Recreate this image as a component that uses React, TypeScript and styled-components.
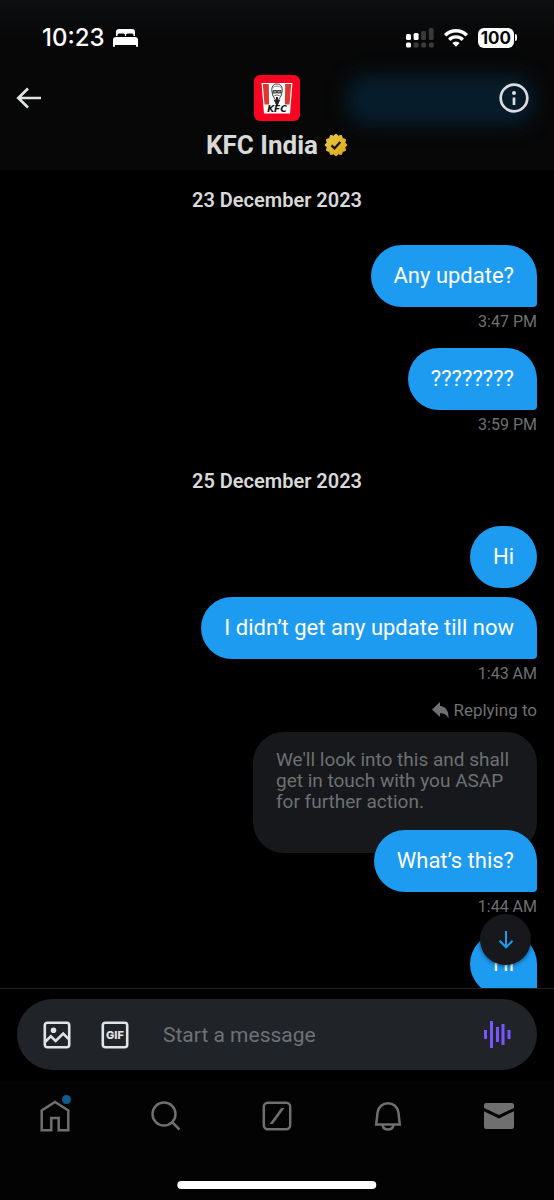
import React from "react";
import styled, { createGlobalStyle } from "styled-components";

const GlobalStyle = createGlobalStyle`
  * { box-sizing: border-box; }
  body { margin: 0; background: #000; font-family: Roboto, sans-serif; }
  button { border: 0; padding: 0; background: none; color: inherit; font: inherit; cursor: pointer; }
  svg { display: block; }
`;

const Screen = styled.div`
  display: flex;
  flex-direction: column;
  height: 100vh;
  overflow: hidden;
  background: #000;
  color: #d9d9d9;
`;

const Top = styled.header`
  position: relative;
  flex: none;
  overflow: hidden;
  background: linear-gradient(#0e0f11 0, #070707 40px, #070707 100%);
`;

const Glow = styled.div`
  position: absolute;
  right: 20px;
  top: 74px;
  width: 188px;
  height: 52px;
  border-radius: 20px;
  background: #071c2a;
  filter: blur(9px);
`;

const StatusBar = styled.div`
  position: relative;
  display: flex;
  align-items: center;
  justify-content: space-between;
  height: 75px;
  padding: 0 37px 0 42px;
  color: #fff;
`;

const Clock = styled.div`
  display: flex;
  align-items: center;
  gap: 8px;
  font: 500 24px/32px Inter, sans-serif;
`;

const StatusIcons = styled.div`
  display: flex;
  align-items: center;
  gap: 10px;
`;

const Battery = styled.div`
  display: flex;
  align-items: center;
  gap: 1px;
`;

const BatteryLevel = styled.span`
  padding: 0 3px;
  border-radius: 6px;
  background: #fff;
  color: #070707;
  font: 700 17px/20px Inter, sans-serif;
`;

const BatteryTip = styled.span`
  width: 2px;
  height: 7px;
  border-radius: 0 2px 2px 0;
  background: #fff;
`;

const NavRow = styled.div`
  position: relative;
  display: grid;
  grid-template-columns: 1fr auto 1fr;
  align-items: center;
  padding: 0 16px;
`;

const IconButton = styled.button<{ $end?: boolean }>`
  justify-self: ${(p) => (p.$end ? "end" : "start")};
  padding-right: ${(p) => (p.$end ? "9px" : "0")};
`;

const Name = styled.h1`
  position: relative;
  display: flex;
  align-items: center;
  justify-content: center;
  gap: 6px;
  margin: 0;
  padding: 9px 0 10px;
  font-size: 26px;
  line-height: 30px;
  font-weight: 700;
`;

const Conversation = styled.main`
  position: relative;
  flex: 1;
  min-height: 0;
  overflow: hidden;
  display: flex;
  flex-direction: column;
  padding: 0 17px;
`;

const Group = styled.section`
  display: flex;
  flex-direction: column;
  align-items: flex-end;
  flex: none;
`;

const DateLabel = styled.h2`
  align-self: center;
  margin: 16px 0 31px;
  font-size: 20px;
  line-height: 28px;
  font-weight: 600;
`;

const Bubble = styled.p<{ $tail?: boolean }>`
  position: relative;
  margin: 0;
  padding: 18px 23px;
  border-radius: ${(p) => (p.$tail ? "31px 31px 4px 31px" : "31px")};
  background: #1d9bf0;
  color: #fff;
  font-size: 22px;
  line-height: 26px;
`;

const Time = styled.time`
  margin: 5px 0 16px;
  color: #6e7072;
  font-size: 16px;
  line-height: 20px;
`;

const Stack = styled.div`
  display: flex;
  flex-direction: column;
  align-items: flex-end;
  gap: 9px;
`;

const ReplyLabel = styled.div`
  display: flex;
  align-items: center;
  gap: 4px;
  margin-bottom: 12px;
  color: #6e7072;
  font-size: 17px;
  line-height: 20px;
`;

const Quote = styled.blockquote`
  width: 284px;
  margin: 0 0 -23px;
  padding: 17px 23px 41px;
  border-radius: 31px;
  background: #16181c;
  color: #6e7072;
  font-size: 19px;
  line-height: 21px;
`;

const ScrollDown = styled.button`
  position: absolute;
  right: 23px;
  bottom: 23px;
  display: grid;
  place-items: center;
  width: 51px;
  height: 51px;
  border-radius: 50%;
  background: #16181c;
  box-shadow: 0 1px 4px rgba(0, 0, 0, 0.5);
`;

const Composer = styled.form`
  flex: none;
  padding: 10px 17px 11px;
  border-top: 1px solid #202224;
`;

const Field = styled.div`
  display: flex;
  align-items: center;
  height: 71px;
  padding: 0 26px;
  border-radius: 36px;
  background: #202327;
`;

const ToolButton = styled.button`
  flex: none;
  margin-right: 30px;
`;

const MessageInput = styled.input`
  flex: 1;
  min-width: 0;
  border: 0;
  outline: 0;
  padding: 0 0 0 4px;
  background: none;
  color: #d9d9d9;
  font: 21px/28px Roboto, sans-serif;
  &::placeholder { color: #6e7277; opacity: 1; }
`;

const TabBar = styled.nav`
  flex: none;
  display: flex;
  justify-content: space-between;
  padding: 0 0 49px;
  background: #030303;
`;

const Tab = styled.button`
  position: relative;
  display: grid;
  place-items: center;
  flex: 1;
  height: 70px;
  color: #6f6f6f;
`;

const Unread = styled.span`
  position: absolute;
  left: calc(50% + 7px);
  top: 14px;
  width: 9px;
  height: 9px;
  border-radius: 50%;
  background: #115a8c;
`;

const HomeIndicator = styled.div`
  position: absolute;
  left: 50%;
  bottom: 11px;
  width: 36%;
  height: 8px;
  border-radius: 4px;
  background: #fff;
  transform: translateX(-50%);
`;

const BedIcon = () => (
  <svg width="25" height="18" viewBox="0 0 25 18" fill="#fff" aria-hidden="true">
    <path d="M3 7V3a3 3 0 0 1 3-3h13a3 3 0 0 1 3 3v4h-1.500V6a1.500 1.500 0 0 0-1.500-1.500h-4.500A1.500 1.500 0 0 0 13 6v1h-1V6a1.500 1.500 0 0 0-1.500-1.500H6A1.500 1.500 0 0 0 4.500 6v1z" />
    <path d="M3 8h19a3 3 0 0 1 3 3v6a1 1 0 0 1-2 0v-1H2v1a1 1 0 0 1-2 0v-6a3 3 0 0 1 3-3z" />
  </svg>
);

const SignalIcon = () => (
  <svg width="28" height="20" viewBox="0 0 28 20" aria-hidden="true">
    <g fill="#fff">
      <rect x="0" y="6" width="5" height="6" rx="1.500" />
      <rect x="7.600" y="5" width="5" height="7" rx="1.500" />
      <rect x="0" y="14.500" width="5" height="5" rx="1.500" />
    </g>
    <g fill="#3a3a3a">
      <rect x="15.200" y="3" width="4.800" height="9" rx="1.500" />
      <rect x="22.800" y="0" width="4.800" height="12" rx="1.500" />
      <rect x="7.600" y="14.500" width="5" height="5" rx="1.500" />
      <rect x="15.200" y="14.500" width="5" height="5" rx="1.500" />
      <rect x="22.800" y="14.500" width="5" height="5" rx="1.500" />
    </g>
  </svg>
);

const WifiIcon = () => (
  <svg width="24" height="18" viewBox="0 0 24 18" fill="none" stroke="#fff" strokeWidth="3.400" aria-hidden="true">
    <path d="M1.200 6.200a15.400 15.400 0 0 1 21.600 0" />
    <path d="M5.200 10.700a9.700 9.700 0 0 1 13.600 0" />
    <path d="M12 17.800l-3.700-3.700a5.200 5.200 0 0 1 7.400 0z" fill="#fff" stroke="none" />
  </svg>
);

const BackIcon = () => (
  <svg width="26" height="22" viewBox="0 0 26 22" fill="none" stroke="#e1e2e3" strokeWidth="2.700" aria-hidden="true">
    <path d="M25 11H2.500M12 1.500L2.300 11l9.700 9.500" />
  </svg>
);

const InfoIcon = () => (
  <svg width="30" height="30" viewBox="0 0 30 30" fill="none" stroke="#d9dde1" strokeWidth="2.700" aria-hidden="true">
    <circle cx="15" cy="15" r="13.300" />
    <path d="M15 14.500v7.500" />
    <circle cx="15" cy="10" r="2" fill="#d9dde1" stroke="none" />
  </svg>
);

const LogoText = styled.text`
  font: italic 700 9px "DejaVu Sans", sans-serif;
`;

const Logo = () => (
  <svg width="46" height="46" viewBox="0 0 46 46" role="img" aria-label="KFC">
    <rect width="46" height="46" rx="6" fill="#f80522" />
    <path d="M7.500 8h31l-2.500 30.500h-26z" fill="#fff" />
    <path d="M8.800 9h6l.3 20.500h-4.600zM37.200 9h-6l-.3 20.500h4.600z" fill="#e03530" />
    <path d="M18 17c-.8-5 1-8 5-8s5.800 3 5 8l-1 4-2 3-2 5.500-2-5.500-2-3z" fill="#fff" stroke="#222" strokeWidth=".9" />
    <path d="M18.500 13c2-2.500 7-2.500 9 0" fill="none" stroke="#555" strokeWidth=".7" />
    <path d="M19 15.500h3.500v2.500H19zM23.500 15.500H27v2.500h-3.500z" fill="#999" stroke="#222" strokeWidth=".8" />
    <path d="M20.300 20.800l2.700-1 2.700 1" fill="none" stroke="#333" strokeWidth=".8" />
    <path d="M22 22h2v3.500l2.500-1-1.500 3-1 2.500h-2l-1-2.500-1.500-3 2.500 1z" fill="#222" />
    <LogoText x="23" y="37" textAnchor="middle" fill="#111">KFC</LogoText>
  </svg>
);

const VerifiedIcon = () => {
  const points = Array.from({ length: 24 }, (_, i) => {
    const r = i % 2 ? 9.200 : 11;
    const a = (i * Math.PI) / 12 - Math.PI / 2;
    return `${12 + r * Math.cos(a)},${12 + r * Math.sin(a)}`;
  }).join(" ");
  return (
    <svg width="24" height="24" viewBox="0 0 24 24" role="img" aria-label="Verified">
      <defs>
        <linearGradient id="gold" x1="0" y1="0" x2="1" y2="1">
          <stop offset="0" stopColor="#ecca45" />
          <stop offset="1" stopColor="#dca718" />
        </linearGradient>
      </defs>
      <polygon points={points} fill="url(#gold)" stroke="url(#gold)" strokeLinejoin="round" />
      <path d="M7.500 12.400l3 3 5.800-6.400" fill="none" stroke="#15130a" strokeWidth="2.200" />
    </svg>
  );
};

const ReplyIcon = () => (
  <svg width="17" height="17" viewBox="0 0 17 17" fill="#6e7072" aria-hidden="true">
    <path d="M0 7.500L8 0v4C13.500 4.500 17 8.500 16.500 16.500 14.800 12.800 12.500 11.300 8 11.300v3.700z" />
  </svg>
);

const DownIcon = () => (
  <svg width="16" height="18" viewBox="0 0 16 18" fill="none" stroke="#1d9bf0" strokeWidth="2" aria-hidden="true">
    <path d="M8 0v16M1.500 9.800L8 16.300l6.500-6.500" />
  </svg>
);

const PictureIcon = () => (
  <svg width="28" height="28" viewBox="0 0 28 28" fill="none" stroke="#e1e3e5" strokeWidth="2.600" aria-hidden="true">
    <rect x="1.800" y="1.800" width="24.400" height="24.400" rx="2.500" />
    <path d="M2 21l5.800-5.600 4.900 4.600 7.500-7.400 6 6" />
    <circle cx="10.500" cy="9.300" r="2.800" fill="#e1e3e5" stroke="none" />
  </svg>
);

const GifText = styled.text`
  font: 800 11px Inter, sans-serif;
`;

const GifIcon = () => (
  <svg width="28" height="28" viewBox="0 0 28 28" aria-hidden="true">
    <rect x="1.800" y="1.800" width="24.400" height="24.400" rx="2.500" fill="none" stroke="#e1e3e5" strokeWidth="2.600" />
    <GifText x="14" y="18" textAnchor="middle" fill="#e1e3e5">GIF</GifText>
  </svg>
);

const VoiceIcon = () => (
  <svg width="27" height="27" viewBox="0 0 27 27" fill="#7856ff" aria-hidden="true">
    <rect x="0" y="9" width="3" height="9" />
    <rect x="6" y="0" width="3" height="27" />
    <rect x="12" y="6" width="3" height="15" />
    <rect x="17.500" y="3" width="3" height="21" />
    <rect x="23.500" y="9" width="3" height="9" />
  </svg>
);

const HomeIcon = () => (
  <svg width="30" height="32" viewBox="0 0 30 32" fill="none" stroke="currentColor" strokeWidth="2.500" aria-hidden="true">
    <path d="M1.700 30.300V10.500L15 2l13.300 8.500v19.800h-9.600V18h-7.400v12.300z" />
  </svg>
);

const SearchIcon = () => (
  <svg width="30" height="30" viewBox="0 0 30 30" fill="none" stroke="currentColor" strokeWidth="2.500" aria-hidden="true">
    <circle cx="13" cy="13" r="11.500" />
    <path d="M21 21l7.500 7.500" />
  </svg>
);

const SlashIcon = () => (
  <svg width="30" height="30" viewBox="0 0 30 30" fill="none" stroke="currentColor" strokeWidth="2.500" aria-hidden="true">
    <rect x="1.800" y="1.800" width="26.400" height="26.400" rx="4" />
    <path d="M7.500 23h3.300L22.500 7h-3.300z" fill="currentColor" stroke="none" />
  </svg>
);

const BellIcon = () => (
  <svg width="28" height="30" viewBox="0 0 28 30" fill="none" stroke="currentColor" strokeWidth="2.500" aria-hidden="true">
    <path d="M2.200 23.500L3.600 11.200a10.500 10.500 0 0 1 20.800 0l1.400 12.300z" />
    <path d="M8.500 24c1 6 10 6 11 0" />
  </svg>
);

const MailIcon = () => (
  <svg width="30" height="28" viewBox="0 0 30 28" fill="currentColor" aria-hidden="true">
    <path d="M0 6V3a2 2 0 0 1 2-2h26a2 2 0 0 1 2 2v3l-15 7z" />
    <path d="M0 9.200l15 7.200 15-7.200V25a2 2 0 0 1-2 2H2a2 2 0 0 1-2-2z" />
  </svg>
);

export default function App() {
  return (
    <Screen>
      <GlobalStyle />
      <Top>
        <Glow />
        <StatusBar>
          <Clock>10:23 <BedIcon /></Clock>
          <StatusIcons>
            <SignalIcon />
            <WifiIcon />
            <Battery>
              <BatteryLevel>100</BatteryLevel>
              <BatteryTip />
            </Battery>
          </StatusIcons>
        </StatusBar>
        <NavRow>
          <IconButton type="button" aria-label="Back"><BackIcon /></IconButton>
          <Logo />
          <IconButton type="button" aria-label="Conversation info" $end><InfoIcon /></IconButton>
        </NavRow>
        <Name>KFC India <VerifiedIcon /></Name>
      </Top>

      <Conversation>
        <Group>
          <DateLabel>23 December 2023</DateLabel>
          <Bubble $tail>Any update?</Bubble>
          <Time>3:47 PM</Time>
          <Bubble $tail>????????</Bubble>
          <Time>3:59 PM</Time>
        </Group>
        <Group>
          <DateLabel>25 December 2023</DateLabel>
          <Stack>
            <Bubble>Hi</Bubble>
            <Bubble $tail>I didn’t get any update till now</Bubble>
          </Stack>
          <Time>1:43 AM</Time>
          <ReplyLabel><ReplyIcon />Replying to</ReplyLabel>
          <Quote>We'll look into this and shall get in touch with you ASAP for further action.</Quote>
          <Bubble $tail>What’s this?</Bubble>
          <Time>1:44 AM</Time>
          <Bubble $tail>Hi</Bubble>
        </Group>
        <ScrollDown type="button" aria-label="Scroll to latest"><DownIcon /></ScrollDown>
      </Conversation>

      <Composer>
        <Field>
          <ToolButton type="button" aria-label="Add photo"><PictureIcon /></ToolButton>
          <ToolButton type="button" aria-label="Add GIF"><GifIcon /></ToolButton>
          <MessageInput aria-label="Message" placeholder="Start a message" />
          <IconButton type="button" aria-label="Record voice message"><VoiceIcon /></IconButton>
        </Field>
      </Composer>

      <TabBar aria-label="Main">
        <Tab type="button" aria-label="Home"><HomeIcon /><Unread /></Tab>
        <Tab type="button" aria-label="Search"><SearchIcon /></Tab>
        <Tab type="button" aria-label="Grok"><SlashIcon /></Tab>
        <Tab type="button" aria-label="Notifications"><BellIcon /></Tab>
        <Tab type="button" aria-label="Messages"><MailIcon /></Tab>
      </TabBar>
      <HomeIndicator />
    </Screen>
  );
}
